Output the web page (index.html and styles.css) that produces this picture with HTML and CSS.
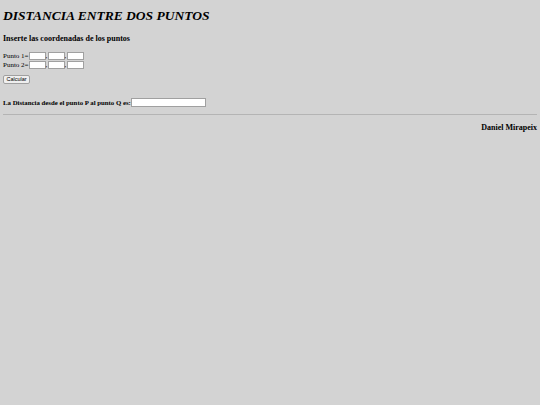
FILE: index.html
```html
<!DOCTYPE html>
<html>
<head>
<meta charset="utf-8">
<link rel="stylesheet" href="styles.css">
</head>
<body>
<h1 class="title">DISTANCIA ENTRE DOS PUNTOS</h1>
<h3 class="subtitle">Inserte las coordenadas de los puntos</h3>
<form class="form">
  <div class="row"><span class="lbl">Punto 1=</span><input class="coord" type="text"><span class="sep">,</span><input class="coord" type="text"><span class="sep">,</span><input class="coord" type="text"></div>
  <div class="row"><span class="lbl">Punto 2=</span><input class="coord" type="text"><span class="sep">,</span><input class="coord" type="text"><span class="sep">,</span><input class="coord" type="text"></div>
  <div class="actions"><button class="btn" type="button">Calcular</button></div>
  <div class="result"><span class="result-label">La Distancia desde el punto P al punto Q es:</span><input class="result-input" type="text"></div>
</form>
<hr class="rule">
<p class="author">Daniel Mirapeix</p>
</body>
</html>
```
FILE: styles.css
```css
html { background: #d3d3d3; }
body {
  margin: 0;
  padding: 0 3px;
  font-family: "Liberation Serif", serif;
  color: #000;
}
.title {
  font-size: 13.5px;
  font-style: italic;
  font-weight: bold;
  margin: 0;
  padding-top: 8px;
  line-height: 16px;
}
.subtitle {
  font-size: 8px;
  font-weight: bold;
  margin: 10px 0 0;
  line-height: 10px;
}
.form { margin: 8px 0 0; padding: 0; font-size: 7px; }
.row {
  display: flex;
  align-items: flex-start;
  height: 9px;
}
.lbl, .sep { line-height: 8px; }
.sep { width: 2px; }
.coord {
  width: 17px;
  height: 8px;
  box-sizing: border-box;
  border: 1px solid #a0a0a0;
  background: #fff;
  padding: 0;
  margin: 0;
  font-size: 6px;
}
.actions { margin-top: 5px; height: 9px; }
.btn {
  display: block;
  font-family: "Liberation Sans", sans-serif;
  font-size: 5.5px;
  height: 9px;
  width: 27px;
  padding: 0;
  border: 1px solid #a0a0a0;
  border-radius: 2px;
  background: #efefef;
  line-height: 7px;
  color: #000;
}
.result {
  margin-top: 14px;
  display: flex;
  align-items: flex-start;
}
.result-label { font-weight: bold; font-size: 6.8px; line-height: 9px; }
.result-input {
  width: 75px;
  height: 9px;
  box-sizing: border-box;
  border: 1px solid #a0a0a0;
  background: #fff;
  padding: 0;
  margin: 0;
}
.rule {
  margin: 7px 0 0;
  border: none;
  border-top: 1px solid #b4b4b4;
  height: 0;
}
.author {
  text-align: right;
  font-weight: bold;
  font-size: 8px;
  line-height: 10px;
  margin: 8px 0 0;
}
```
